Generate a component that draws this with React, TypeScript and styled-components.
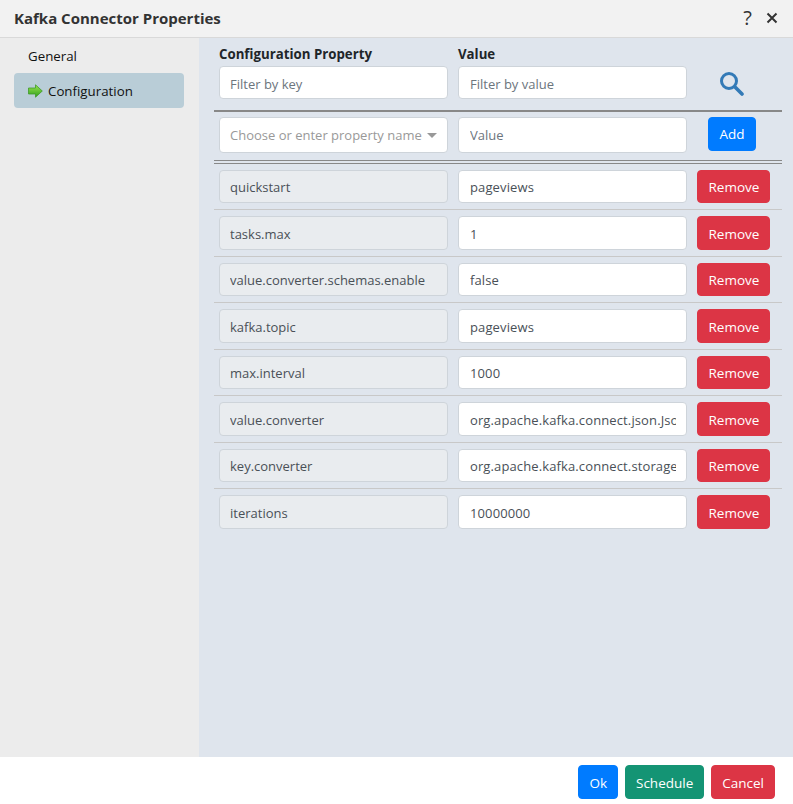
import styled, { createGlobalStyle } from "styled-components";

const GlobalStyle = createGlobalStyle`
  html, body {
    margin: 0;
    padding: 0;
    background: #fff;
  }
  * {
    box-sizing: border-box;
  }
`;

const properties = [
  { key: "quickstart", value: "pageviews" },
  { key: "tasks.max", value: "1" },
  { key: "value.converter.schemas.enable", value: "false" },
  { key: "kafka.topic", value: "pageviews" },
  { key: "max.interval", value: "1000" },
  { key: "value.converter", value: "org.apache.kafka.connect.json.JsonConverter" },
  { key: "key.converter", value: "org.apache.kafka.connect.storage.StringConverter" },
  { key: "iterations", value: "10000000" },
];

export default function App() {
  return (
    <Dialog>
      <GlobalStyle />
      <TitleBar>
        <Title>Kafka Connector Properties</Title>
        <TitleActions>
          <Help>?</Help>
          <svg width="12" height="12" viewBox="0 0 12 12">
            <path d="M1.5 1.5 L10.5 10.5 M10.5 1.5 L1.5 10.5" stroke="#333" strokeWidth="2" />
          </svg>
        </TitleActions>
      </TitleBar>
      <Body>
        <Sidebar>
          <NavItem>General</NavItem>
          <NavItem $active>
            <svg width="15" height="14" viewBox="0 0 15 14">
              <defs>
                <linearGradient id="arrowFill" x1="0" y1="0" x2="0" y2="1">
                  <stop offset="0" stopColor="#9ce650" />
                  <stop offset="1" stopColor="#2f9e1c" />
                </linearGradient>
              </defs>
              <path
                d="M0.5 4 H7.5 V0.8 L14.3 7 L7.5 13.2 V10 H0.5 Z"
                fill="url(#arrowFill)"
                stroke="#3f9a2a"
                strokeWidth="0.8"
              />
            </svg>
            Configuration
          </NavItem>
        </Sidebar>
        <Main>
          <FilterRow>
            <Column>
              <ColumnLabel>Configuration Property</ColumnLabel>
              <FilterKeyInput placeholder="Filter by key" />
            </Column>
            <Column>
              <ColumnLabel>Value</ColumnLabel>
              <FilterValueInput placeholder="Filter by value" />
            </Column>
            <SearchSlot>
              <svg width="24" height="24" viewBox="0 0 24 24">
                <circle cx="9" cy="9" r="7.5" fill="none" stroke="#337ab7" strokeWidth="3" />
                <path d="M15 15 L22 22" stroke="#337ab7" strokeWidth="3.6" strokeLinecap="round" />
              </svg>
            </SearchSlot>
          </FilterRow>
          <AddRow>
            <SelectBox>
              <SelectInput placeholder="Choose or enter property name" />
              <Caret />
            </SelectBox>
            <TallInput placeholder="Value" />
            <AddSlot>
              <Button $color="#007bff">Add</Button>
            </AddSlot>
          </AddRow>
          {properties.map((p) => (
            <PropertyRow key={p.key}>
              <TextInput value={p.key} disabled readOnly />
              <ValueInput value={p.value} readOnly />
              <Button $color="#dc3545">Remove</Button>
            </PropertyRow>
          ))}
        </Main>
      </Body>
      <Footer>
        <FooterButton $color="#007bff">Ok</FooterButton>
        <FooterButton $color="#149474">Schedule</FooterButton>
        <FooterButton $color="#dc3545">Cancel</FooterButton>
      </Footer>
    </Dialog>
  );
}

const Dialog = styled.div`
  width: 793px;
  height: 804px;
  display: flex;
  flex-direction: column;
  overflow: hidden;
  font-family: "Open Sans", "Noto Sans", "Liberation Sans", sans-serif;
  font-size: 13px;
  color: #212529;
`;

const TitleBar = styled.header`
  height: 38px;
  flex-shrink: 0;
  display: flex;
  align-items: center;
  justify-content: space-between;
  padding: 0 15px 2px 14px;
  background: #f2f2f2;
  border-bottom: 1px solid #d9d9d9;
`;

const Title = styled.h1`
  margin: 0;
  font-size: 15px;
  font-weight: 700;
  color: #333;
`;

const TitleActions = styled.div`
  display: flex;
  align-items: center;
  gap: 14px;
`;

const Help = styled.span`
  font-size: 20px;
  line-height: 20px;
  color: #333;
`;

const Body = styled.div`
  flex: 1;
  display: flex;
  min-height: 0;
`;

const Sidebar = styled.nav`
  width: 199px;
  flex-shrink: 0;
  padding: 0 15px 0 14px;
  background: #ececec;
`;

const NavItem = styled.div<{ $active?: boolean }>`
  height: 35px;
  display: flex;
  align-items: center;
  gap: 5px;
  padding-left: 14px;
  border-radius: 4px;
  font-size: 13.3px;
  color: #111;
  background: ${(p) => (p.$active ? "#b9cdd7" : "transparent")};
`;

const Main = styled.main`
  flex: 1;
  padding: 0 11px 0 15px;
  background: #dfe5ed;
`;

const FilterRow = styled.div`
  height: 74px;
  display: grid;
  grid-template-columns: 229px 229px 1fr;
  column-gap: 10px;
  padding-left: 5px;
  border-bottom: 2px solid #888;
`;

const Column = styled.div`
  display: flex;
  flex-direction: column;
`;

const ColumnLabel = styled.label`
  height: 28px;
  padding-top: 7px;
  font-size: 13.25px;
  line-height: 18px;
  font-weight: 700;
  color: #212529;
`;

const SearchSlot = styled.div`
  padding: 34px 0 0 23px;
`;

const TextInput = styled.input`
  height: 33.5px;
  width: 100%;
  min-width: 0;
  padding: 1px 10px 0;
  font: inherit;
  color: #495057;
  background: #fff;
  border: 1px solid #ced4da;
  border-radius: 4px;
  outline: none;

  &::placeholder {
    color: #6c757d;
    opacity: 1;
  }

  &:disabled {
    background: #e9ecef;
    opacity: 1;
  }
`;

const ValueInput = styled(TextInput)`
  padding-left: 11px;
  letter-spacing: 0.12px;
`;

const FilterKeyInput = styled(TextInput)`
  height: 33px;
  padding-top: 2px;
`;

const FilterValueInput = styled(FilterKeyInput)`
  padding-left: 11px;
`;

const AddRow = styled.div`
  height: 51.75px;
  display: grid;
  grid-template-columns: 229px 229px 1fr;
  column-gap: 10px;
  padding: 5px 0 0 5px;
  border-bottom: 4px double #888;
`;

const SelectBox = styled.div`
  position: relative;
  height: 36px;
`;

const SelectInput = styled(TextInput)`
  height: 36px;
  padding: 0 25px 0 10px;

  &::placeholder {
    color: #999;
  }
`;

const Caret = styled.span`
  position: absolute;
  top: 16px;
  right: 11px;
  border-left: 5px solid transparent;
  border-right: 5px solid transparent;
  border-top: 5px solid #999;
`;

const TallInput = styled(TextInput)`
  height: 36px;
  padding: 0 10px 0 11px;
`;

const AddSlot = styled.div`
  padding-left: 11px;
`;

const PropertyRow = styled.div`
  height: 46.5px;
  display: grid;
  grid-template-columns: 229px 229px 73px;
  column-gap: 10px;
  align-items: start;
  padding: 6px 0 0 5px;
  border-bottom: 1px solid #c8c8c8;

  &:last-child {
    border-bottom: none;
  }
`;

const Button = styled.button<{ $color: string }>`
  height: 33.5px;
  padding: 1px 10.5px 0;
  font: inherit;
  font-size: 13.5px;
  color: #fff;
  background: ${(p) => p.$color};
  border: 1px solid ${(p) => p.$color};
  border-radius: 4px;
`;

const FooterButton = styled(Button)`
  height: 34px;
  padding: 2px 10px 0;
`;

const Footer = styled.footer`
  height: 47px;
  flex-shrink: 0;
  display: flex;
  justify-content: flex-end;
  align-items: center;
  gap: 7px;
  padding: 3px 18px 0 0;
  background: #fff;
`;
